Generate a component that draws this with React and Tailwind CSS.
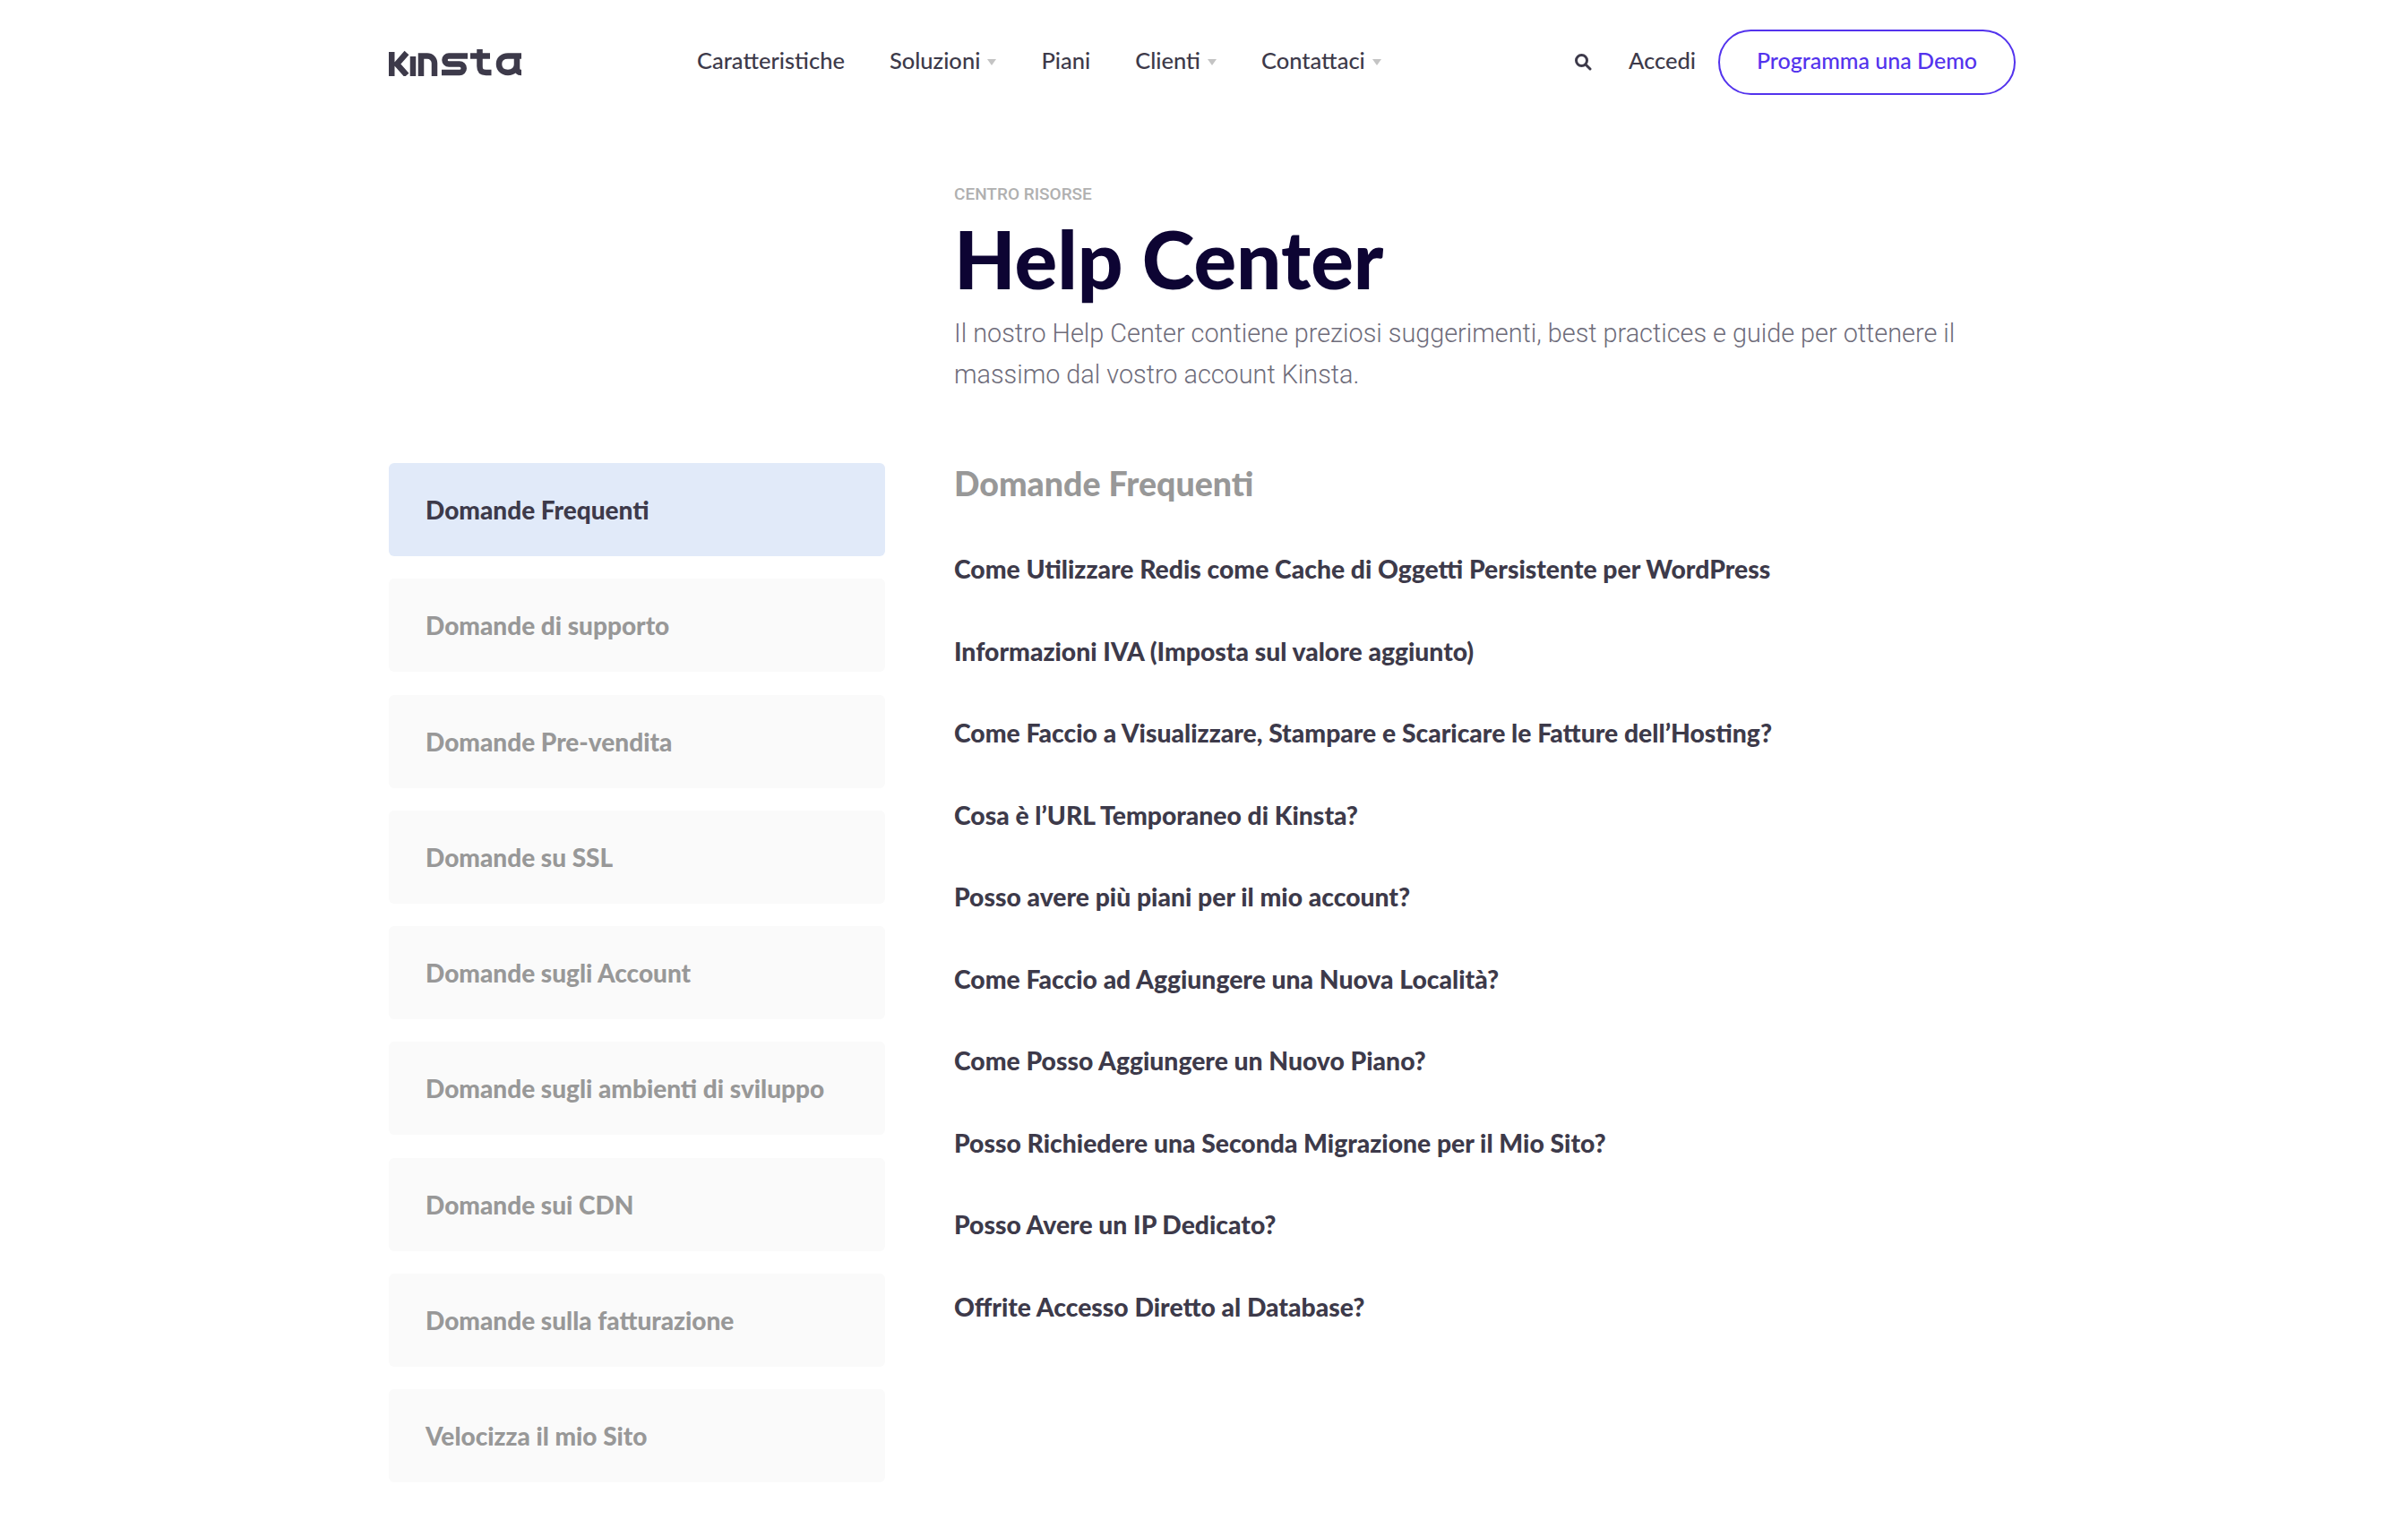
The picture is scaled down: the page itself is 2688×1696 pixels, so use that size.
import React from 'react';

const categories = [
  'Domande Frequenti',
  'Domande di supporto',
  'Domande Pre-vendita',
  'Domande su SSL',
  'Domande sugli Account',
  'Domande sugli ambienti di sviluppo',
  'Domande sui CDN',
  'Domande sulla fatturazione',
  'Velocizza il mio Sito',
];

const questions = [
  'Come Utilizzare Redis come Cache di Oggetti Persistente per WordPress',
  'Informazioni IVA (Imposta sul valore aggiunto)',
  'Come Faccio a Visualizzare, Stampare e Scaricare le Fatture dell’Hosting?',
  'Cosa è l’URL Temporaneo di Kinsta?',
  'Posso avere più piani per il mio account?',
  'Come Faccio ad Aggiungere una Nuova Località?',
  'Come Posso Aggiungere un Nuovo Piano?',
  'Posso Richiedere una Seconda Migrazione per il Mio Sito?',
  'Posso Avere un IP Dedicato?',
  'Offrite Accesso Diretto al Database?',
];

function Logo() {
  return (
    <svg className="mt-[1px] shrink-0" width="148" height="30" viewBox="0 0 148 30" fill="none" stroke="#3d3a4a" strokeWidth="6.500">
      <path d="M3.250 3v27M20 4 9 16.500 20 29" />
      <path d="M27 8v22" />
      <path d="M36 30V7.500h7a8 8 0 0 1 8 8V30" />
      <path d="M88 7.500H67a4.500 4.500 0 0 0 0 9h12a4.500 4.500 0 0 1 0 9.500H59" />
      <path d="M101.500 0v19c0 5 2 7 7 7h6M91 7.500h22" />
      <path d="M148 7.500h-15c-7 0-10 4.500-10 9S126 26 133 26c6 0 10-4 10-9V9 20c0 4 1 6 5 6" />
    </svg>
  );
}

function Caret() {
  return <span className="mt-1 ml-2 border-x-[5px] border-t-[7px] border-x-transparent border-t-[#c4c4c4]" />;
}

function NavItem({ label, caret }) {
  return (
    <a className="flex items-center">
      {label}
      {caret && <Caret />}
    </a>
  );
}

export default function App() {
  return (
    <div className="min-h-screen bg-white font-['Lato',sans-serif]">
      <div className="ml-[434px] w-[1816px]">
        <header className="flex h-[138px] items-center text-[25.500px] font-medium text-[#3d3a4a]">
          <Logo />
          <nav className="ml-[196px] flex items-center gap-[50px] pb-[4px]">
            <NavItem label="Caratteristiche" />
            <NavItem label="Soluzioni" caret />
            <NavItem label="Piani" />
            <NavItem label="Clienti" caret />
            <NavItem label="Contattaci" caret />
          </nav>
          <div className="ml-auto flex items-center">
            <svg width="20" height="20" viewBox="0 0 20 20" fill="none" stroke="#3d3a4a" strokeWidth="3" strokeLinecap="round">
              <circle cx="8.500" cy="8.500" r="6" />
              <path d="m13.500 13.500 4.500 4.500" />
            </svg>
            <a className="ml-[41px] pb-[4px]">Accedi</a>
            <a className="ml-[25px] flex h-[73px] w-[332px] items-center justify-center rounded-full border-2 border-[#5333ed] pb-[3px] text-[25px] text-[#5333ed]">
              Programma una Demo
            </a>
          </div>
        </header>

        <div className="grid grid-cols-[554px_1fr] gap-x-[77px]">
          <div />
          <div className="pt-[68px]">
            <p className="font-['Roboto',sans-serif] text-[19px] leading-[22px] font-medium text-[#b0b0b0] uppercase">
              Centro risorse
            </p>
            <h1 className="mt-[11px] text-[89px] leading-[100px] font-black text-[#0d0433]">Help Center</h1>
            <p className="mt-[10px] font-['Roboto',sans-serif] text-[28.800px] leading-[46px] font-light text-[#6e6c7a]">
              Il nostro Help Center contiene preziosi suggerimenti, best practices e guide per ottenere il massimo dal vostro account Kinsta.
            </p>
          </div>

          <aside className="mt-[76px] flex flex-col gap-[25.300px]">
            {categories.map((name, idx) => (
              <a
                key={name}
                className={
                  idx === 0
                    ? 'flex h-[104px] items-center rounded-md bg-[#e1eaf9] pl-[41px] text-[28px] font-black text-[#3d3a4a]'
                    : 'flex h-[104px] items-center rounded-md bg-[#fafafa] pl-[41px] text-[28px] font-black text-[#989898]'
                }
              >
                {name}
              </a>
            ))}
          </aside>

          <main className="mt-[74px]">
            <h2 className="text-[37.500px] leading-[50px] font-black text-[#989898]">Domande Frequenti</h2>
            <ul className="mt-[50px] flex flex-col gap-[51.500px]">
              {questions.map((q) => (
                <li key={q} className="text-[28.300px] leading-[40px] font-black text-[#3d3a4a]">{q}</li>
              ))}
            </ul>
          </main>
        </div>
      </div>
    </div>
  );
}
